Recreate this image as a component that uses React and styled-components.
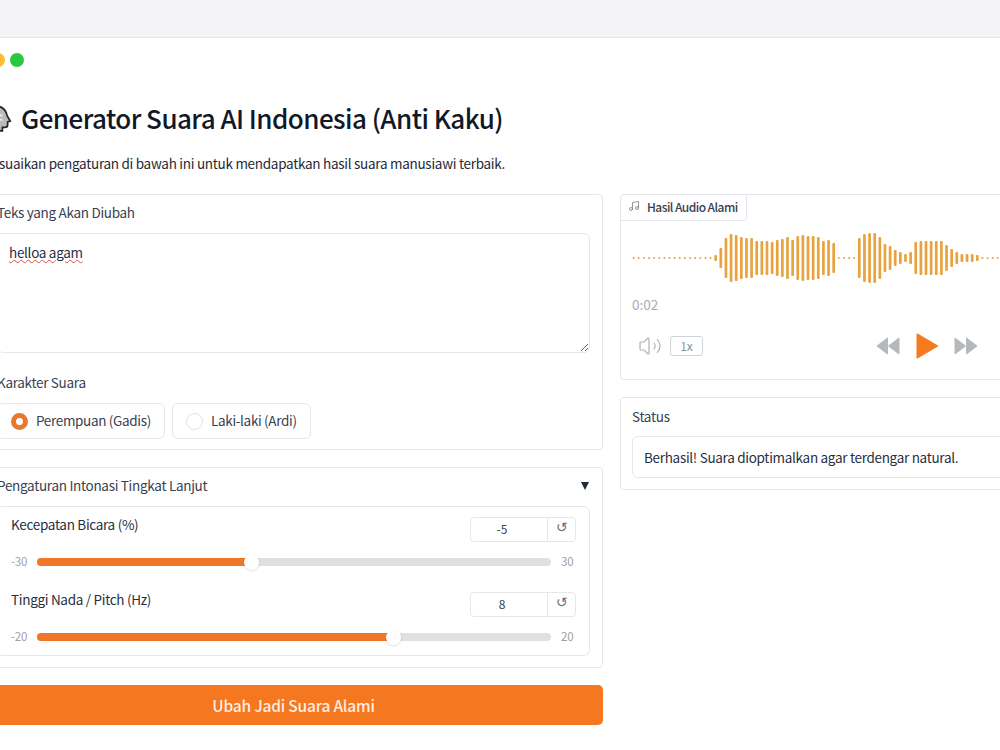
import React from "react";
import styled, { createGlobalStyle } from "styled-components";
import { Music, Volume2 } from "lucide-react";

const GlobalStyle = createGlobalStyle`
  html, body {
    margin: 0;
    padding: 0;
    background: #fff;
    overflow: hidden;
  }
  body {
    font-family: "Noto Sans CJK SC", "Noto Sans", sans-serif;
    color: #27303f;
  }
`;

// half heights of the wave bars, 1 is a dot
const WAVE = [
  ...Array(16).fill(1),
  3, 10, 20, 24, 23, 21, 20, 20, 17, 17, 17, 16, 18, 19, 21, 18, 22, 23, 22, 22, 21, 17, 18, 15,
  1, 1, 1, 1,
  20, 24, 25, 25, 21, 14, 12, 8, 6, 4, 6, 16, 17, 17, 17, 17, 17, 13, 9, 6, 4, 4, 4, 3,
  ...Array(14).fill(1),
];

const Slider = ({ label, value, min, max, pct }) => (
  <SliderBlock>
    <SliderHead>
      <SliderLabel>{label}</SliderLabel>
      <NumberBox>
        <NumberValue>{value}</NumberValue>
        <ResetButton>↺</ResetButton>
      </NumberBox>
    </SliderHead>
    <SliderRow>
      <RangeText>{min}</RangeText>
      <Track>
        <Fill $pct={pct} />
        <Thumb $pct={pct} />
      </Track>
      <RangeText>{max}</RangeText>
    </SliderRow>
  </SliderBlock>
);

const App = () => {
  return (
    <Page>
      <GlobalStyle />
      <TopBar />
      <Window>
        <Dots>
          <Dot $color="#ff5f57" />
          <Dot $color="#febc2e" />
          <Dot $color="#28c840" />
        </Dots>
        <Content>
          <TitleRow>
            <HeadIcon viewBox="0 0 32 32">
              <path
                d="M14 2 C7 2 2 8 2 15 c0 5 2 8 4 10 v5 h15 v-4 h3 c2 0 3 -1 3 -3 v-3 l3 -1 l-3.5 -6 C25 6 21 2 14 2 Z"
                fill="#b9bbbd"
                stroke="#26282b"
                strokeWidth="2"
              />
              <path d="M9 8 L21 13 M7 13 L21 18 M8 19 L18 23" stroke="#eceded" strokeWidth="2" fill="none" />
            </HeadIcon>
            <Title>Generator Suara AI Indonesia (Anti Kaku)</Title>
          </TitleRow>
          <Description>Sesuaikan pengaturan di bawah ini untuk mendapatkan hasil suara manusiawi terbaik.</Description>
          <Columns>
            <Column>
              <FormPanel>
                <FieldLabel>Teks yang Akan Diubah</FieldLabel>
                <TextArea defaultValue="helloa agam" spellCheck={false} />
                <FieldLabel $spaced>Karakter Suara</FieldLabel>
                <RadioGroup>
                  <RadioOption>
                    <RadioMark $checked />
                    <RadioText>Perempuan (Gadis)</RadioText>
                  </RadioOption>
                  <RadioOption>
                    <RadioMark />
                    <RadioText>Laki-laki (Ardi)</RadioText>
                  </RadioOption>
                </RadioGroup>
              </FormPanel>
              <Panel>
                <AccordionHead>
                  <FieldLabel>Pengaturan Intonasi Tingkat Lanjut</FieldLabel>
                  <Caret />
                </AccordionHead>
                <InnerBox>
                  <Slider label="Kecepatan Bicara (%)" value="-5" min="-30" max="30" pct={41.8} />
                  <Slider label="Tinggi Nada / Pitch (Hz)" value="8" min="-20" max="20" pct={69.3} />
                </InnerBox>
              </Panel>
              <SubmitButton>Ubah Jadi Suara Alami</SubmitButton>
            </Column>
            <Column>
              <PlayerPanel>
                <Tab>
                  <TabIcon>
                    <Music size={12} strokeWidth={1.6} color="#777d86" />
                  </TabIcon>
                  Hasil Audio Alami
                </Tab>
                <WaveForm viewBox="0 0 420 60">
                  {WAVE.map((h, i) => (
                    <rect
                      key={i}
                      x={1.6 + i * 5.13 - (h > 1 ? 1.35 : 1)}
                      y={30 - h}
                      width={h > 1 ? 2.7 : 2}
                      height={h * 2}
                      rx="1"
                      fill="#e8a33f"
                    />
                  ))}
                </WaveForm>
                <TimeText>0:02</TimeText>
                <Controls>
                  <LeftControls>
                    <Volume2 size={24} strokeWidth={1.2} color="#aeb2b8" />
                    <SpeedBox>1x</SpeedBox>
                  </LeftControls>
                  <Transport>
                    <TransportIcon viewBox="0 0 23 18" $w={23}>
                      <path d="M11.5 1 L1 9 L11.5 17 Z M23 1 L12.5 9 L23 17 Z" fill="#b5b8bd" stroke="#b5b8bd" strokeLinejoin="round" />
                    </TransportIcon>
                    <TransportIcon viewBox="0 0 22 26" $w={22} $h={26}>
                      <path d="M1.5 1.5 L21 13 L1.5 24.5 Z" fill="#f47b20" stroke="#f47b20" strokeWidth="2" strokeLinejoin="round" />
                    </TransportIcon>
                    <TransportIcon viewBox="0 0 23 18" $w={23}>
                      <path d="M0 1 L10.5 9 L0 17 Z M11.5 1 L22 9 L11.5 17 Z" fill="#b5b8bd" stroke="#b5b8bd" strokeLinejoin="round" />
                    </TransportIcon>
                  </Transport>
                </Controls>
              </PlayerPanel>
              <StatusPanel>
                <FieldLabel>Status</FieldLabel>
                <StatusBox>Berhasil! Suara dioptimalkan agar terdengar natural.</StatusBox>
              </StatusPanel>
            </Column>
          </Columns>
        </Content>
      </Window>
    </Page>
  );
};

// Styled components
const Page = styled.div`
  width: 1000px;
  height: 750px;
  overflow: hidden;
  background: #fff;
`;

const TopBar = styled.div`
  height: 37px;
  background: #f4f4f6;
  border-bottom: 1px solid #e6e7ea;
`;

const Window = styled.div`
  margin-left: -28px;
  width: 1300px;
  padding-top: 15px;
`;

const Dots = styled.div`
  display: flex;
  gap: 5px;
`;

const Dot = styled.span`
  width: 14px;
  height: 14px;
  border-radius: 50%;
  background: ${(p) => p.$color};
`;

const Content = styled.div`
  padding-left: 12px;
`;

const TitleRow = styled.div`
  display: flex;
  align-items: center;
  gap: 9px;
  margin-top: 31px;
  height: 40px;
`;

const HeadIcon = styled.svg`
  width: 28px;
  height: 31px;
  flex: none;
`;

const Title = styled.h1`
  margin: 0;
  font-size: 26px;
  font-weight: 500;
  letter-spacing: -0.55px;
  line-height: 40px;
  color: #111827;
  white-space: nowrap;
`;

const Description = styled.p`
  margin: 15px 0 0;
  font-size: 13.5px;
  letter-spacing: -0.28px;
  line-height: 20px;
  color: #1f2937;
  white-space: nowrap;
`;

const Columns = styled.div`
  display: grid;
  grid-template-columns: 619px 614px;
  gap: 17px;
  margin-top: 21px;
`;

const Column = styled.div`
  display: flex;
  flex-direction: column;
  gap: 17px;
`;

const Panel = styled.section`
  border: 1px solid #e5e7eb;
  border-radius: 4px;
  padding: 8px 12px 11px;
  background: #fff;
`;

const FormPanel = styled(Panel)`
  padding-bottom: 10px;
`;

const StatusPanel = styled(Panel)`
  padding-top: 9px;
  padding-left: 11px;
`;

const FieldLabel = styled.div`
  padding-bottom: 2px;
  font-size: 13.5px;
  letter-spacing: -0.3px;
  line-height: 18px;
  color: #374151;
  margin-top: ${(p) => (p.$spaced ? "20px" : "0")};
`;

const TextArea = styled.textarea`
  display: block;
  box-sizing: border-box;
  width: 100%;
  height: 120px;
  margin-top: 10px;
  padding: 8px 11px;
  border: 1.5px solid #e5e7eb;
  border-radius: 6px;
  outline: none;
  resize: vertical;
  font-family: inherit;
  font-size: 13.5px;
  letter-spacing: -0.3px;
  line-height: 20px;
  color: #27303f;
  text-decoration: underline wavy #d8504d 1px;
`;

const RadioGroup = styled.div`
  display: flex;
  gap: 7px;
  margin-top: 10px;
`;

const RadioOption = styled.label`
  display: flex;
  align-items: center;
  gap: 8px;
  height: 36px;
  box-sizing: border-box;
  padding: 0 13px;
  border: 1.5px solid #e5e7eb;
  border-radius: 6px;
`;

const RadioText = styled.span`
  padding-bottom: 3px;
  font-size: 13.5px;
  letter-spacing: -0.33px;
  color: #374151;
  white-space: nowrap;
`;

const RadioMark = styled.span`
  box-sizing: border-box;
  width: 17px;
  height: 17px;
  border-radius: 50%;
  border: ${(p) => (p.$checked ? "5.5px solid #e8792b" : "1.5px solid #dfe1e5")};
  background: #fff;
`;

const AccordionHead = styled.div`
  display: flex;
  align-items: flex-start;
  justify-content: space-between;
  height: 20px;
  padding-right: 1px;
  margin-bottom: 10px;
`;

const Caret = styled.span`
  width: 0;
  height: 0;
  margin-top: 6px;
  border-left: 4.5px solid transparent;
  border-right: 4.5px solid transparent;
  border-top: 8px solid #1f2937;
`;

const InnerBox = styled.div`
  display: flex;
  flex-direction: column;
  gap: 20px;
  border: 1px solid #e5e7eb;
  border-radius: 6px;
  padding: 10px 13px 8px;
`;

const SliderBlock = styled.div`
  display: flex;
  flex-direction: column;
  gap: 10px;
`;

const SliderHead = styled.div`
  display: flex;
  justify-content: space-between;
  align-items: flex-start;
`;

const SliderLabel = styled.span`
  font-size: 13.5px;
  letter-spacing: -0.3px;
  line-height: 15px;
  color: #27303f;
`;

const NumberBox = styled.div`
  display: flex;
  box-sizing: border-box;
  width: 106px;
  height: 25px;
  border: 1px solid #e5e7eb;
  border-radius: 4px;
`;

const NumberValue = styled.span`
  flex: 1;
  padding-right: 14px;
  text-align: center;
  font-size: 12px;
  line-height: 21px;
  color: #374151;
`;

const ResetButton = styled.span`
  width: 27px;
  border-left: 1px solid #e5e7eb;
  text-align: center;
  font-family: "DejaVu Sans", sans-serif;
  font-size: 14px;
  line-height: 18px;
  color: #6b7280;
`;

const SliderRow = styled.div`
  display: flex;
  align-items: center;
  gap: 9px;
  height: 20px;
`;

const RangeText = styled.span`
  width: 17px;
  margin-bottom: 3px;
  font-size: 11.5px;
  letter-spacing: -0.2px;
  color: #a0a0a0;
  white-space: nowrap;
  &:last-child {
    width: 16px;
    padding-left: 1px;
    box-sizing: border-box;
  }
`;

const Track = styled.div`
  position: relative;
  flex: 1;
  height: 8px;
  border-radius: 4px;
  background: #e0e0e0;
`;

const Fill = styled.div`
  width: ${(p) => p.$pct}%;
  height: 100%;
  border-radius: 4px 0 0 4px;
  background: #f0772a;
`;

const Thumb = styled.span`
  position: absolute;
  top: 50%;
  left: ${(p) => p.$pct}%;
  width: 15px;
  height: 15px;
  margin: -7.5px 0 0 -7.5px;
  border-radius: 50%;
  background: #fff;
  box-shadow: 0 1px 3px rgba(0, 0, 0, 0.12);
`;

const SubmitButton = styled.button`
  height: 40px;
  padding: 0 0 1px;
  border: none;
  border-radius: 5px;
  background: #f5771f;
  color: #fdeee0;
  font-family: inherit;
  font-size: 15.5px;
  font-weight: 500;
  letter-spacing: -0.2px;
`;

const PlayerPanel = styled.section`
  box-sizing: border-box;
  height: 186px;
  border: 1px solid #e5e7eb;
  border-radius: 4px;
  background: #fff;
`;

const Tab = styled.div`
  display: flex;
  align-items: center;
  gap: 7px;
  box-sizing: border-box;
  width: 126px;
  height: 26px;
  padding: 0 0 3px 7px;
  border-right: 1px solid #e5e7eb;
  border-bottom: 1px solid #e5e7eb;
  border-radius: 0 0 5px 0;
  font-size: 12px;
  font-weight: 500;
  letter-spacing: -0.55px;
  color: #374151;
  white-space: nowrap;
`;

const TabIcon = styled.span`
  display: flex;
  flex: none;
`;

const WaveForm = styled.svg`
  display: block;
  width: 420px;
  height: 60px;
  margin: 7px 0 0 11px;
`;

const TimeText = styled.div`
  margin: 6px 0 0 11px;
  font-size: 13.5px;
  line-height: 20px;
  color: #a8adb4;
`;

const Controls = styled.div`
  display: grid;
  grid-template-columns: 1fr auto 1fr;
  align-items: center;
  height: 26px;
  margin-top: 19px;
  padding: 0 11px;
`;

const LeftControls = styled.div`
  display: flex;
  align-items: center;
  gap: 8px;
  padding-left: 6px;
`;

const SpeedBox = styled.span`
  box-sizing: border-box;
  width: 33px;
  height: 20px;
  border: 1.5px solid #cfd2d6;
  border-radius: 3px;
  text-align: center;
  font-size: 12px;
  line-height: 17px;
  color: #8d9299;
`;

const Transport = styled.div`
  display: flex;
  align-items: center;
  gap: 17px;
`;

const TransportIcon = styled.svg`
  width: ${(p) => p.$w}px;
  height: ${(p) => p.$h || 18}px;
  overflow: visible;
`;

const StatusBox = styled.div`
  box-sizing: border-box;
  height: 42px;
  margin-top: 9px;
  padding: 0 11px;
  border: 1px solid #e5e7eb;
  border-radius: 6px;
  font-size: 13.5px;
  letter-spacing: -0.3px;
  line-height: 40px;
  color: #27303f;
`;

export default App;
